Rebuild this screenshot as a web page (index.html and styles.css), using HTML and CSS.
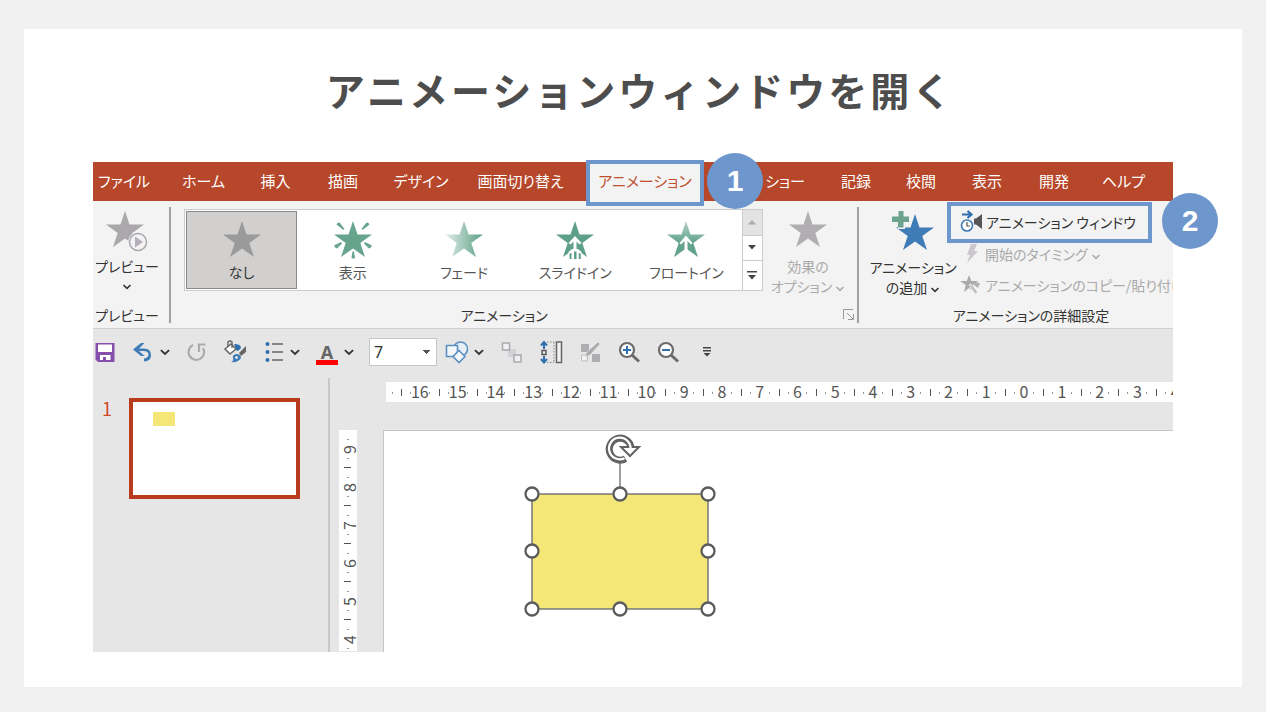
FILE: index.html
```html
<!DOCTYPE html>
<html lang="ja">
<head>
<meta charset="utf-8">
<meta name="viewport" content="width=device-width, initial-scale=1">
<title>アニメーションウィンドウを開く</title>
<link rel="stylesheet" href="styles.css">
</head>
<body>
<svg class="defs" aria-hidden="true">
  <defs>
    <linearGradient id="fade" x1="0" y1="0" x2="1" y2="0"><stop offset="0" stop-color="#e3efea"/><stop offset="1" stop-color="#5a9e85"/></linearGradient>
    <linearGradient id="float" x1="0" y1="0" x2="0" y2="1"><stop offset="0" stop-color="#b5d4c8"/><stop offset=".6" stop-color="#62a38b"/></linearGradient>
    <path id="star" d="M19 0 23.5 13.5H38L26.300 22 31 36 19 27.500 7 36 11.700 22 0 13.500H14.500Z"/>
    <symbol id="chev" viewBox="0 0 10 6"><path d="M1.500 1 5 4.300 8.500 1" fill="none" stroke="currentColor" stroke-width="1.600"/></symbol>
  </defs>
</svg>
<main class="card">
  <h1 class="title">アニメーションウィンドウを開く</h1>
  <section class="app">
    <nav class="tabs">
      <a href="#">ファイル</a>
      <a href="#">ホーム</a>
      <a href="#">挿入</a>
      <a href="#">描画</a>
      <a href="#">デザイン</a>
      <a href="#">画面切り替え</a>
      <a href="#" class="current" aria-current="page">アニメーション<b class="step step-one">1</b></a>
      <a href="#" class="slideshow">スライド ショー</a>
      <a href="#">記録</a>
      <a href="#">校閲</a>
      <a href="#">表示</a>
      <a href="#">開発</a>
      <a href="#">ヘルプ</a>
    </nav>

    <div class="ribbon">
      <section class="group preview">
        <button class="tall">
          <svg width="42" height="42" viewBox="0 0 42 42"><use href="#star" fill="#aaa8aa"/><circle cx="32" cy="31" r="10" fill="#f3f3f3"/><circle cx="32" cy="31" r="8.500" fill="#f3f3f3" stroke="#aaa5ac" stroke-width="1.500"/><path d="M29 25.500 37 31l-8 5.500Z" fill="#b5adb8"/></svg>
          <span>プレビュー</span>
          <svg class="chev" width="10" height="6"><use href="#chev"/></svg>
        </button>
        <h2>プレビュー</h2>
      </section>

      <section class="group animation">
        <div class="group-body">
          <div class="gallery">
            <button class="effect selected"><svg width="38" height="38" viewBox="0 0 38 38"><use href="#star" fill="#9a9a9a"/></svg><span>なし</span></button>
            <button class="effect"><svg width="38" height="38" viewBox="0 0 38 38"><use href="#star" fill="#66a48d"/><g fill="#66a48d"><path d="M2.500 3.500Q3 1.500 5.500 1.500L10.500 8 9.500 9Z"/><path d="M35.500 3.500Q35 1.500 32.500 1.500L27.500 8 28.500 9Z"/><path d="M0 24.500 7 21 8 22.500 3 27.500Q1 27 0 24.500Z"/><path d="M38 24.500 31 21 30 22.500 35 27.500Q37 27 38 24.500Z"/><path d="M18.500 30.500h1.500l1 6.500q-2 1-3.500 0Z"/></g></svg><span>表示</span></button>
            <button class="effect"><svg width="38" height="38" viewBox="0 0 38 38"><use href="#star" fill="url(#fade)"/></svg><span>フェード</span></button>
            <button class="effect"><svg width="38" height="38" viewBox="0 0 38 38"><use href="#star" fill="#5d9f87"/><path d="M12.500 22 19 15l6.500 7-2 1.500-3-3V29H17.500V20.500l-3 3Z" fill="#fff"/><path d="M12.500 31 16 28h6l3.500 3v7h-13Z" fill="#fff"/><path d="M13.500 33l2-1.500V38h-2ZM18 30.500h2.500V38H18ZM22.800 31.500l2 1.500v5h-2Z" fill="#5d9f87"/></svg><span>スライドイン</span></button>
            <button class="effect"><svg width="38" height="38" viewBox="0 0 38 38"><use href="#star" fill="url(#float)"/><path d="M12.500 22 19 14.500l6.500 7.500-1.500 1.500-3.500-3.500V29H17.500V20L14 23.500Z" fill="#fff"/></svg><span>フロートイン</span></button>
            <div class="scroller">
              <button disabled aria-label="上へ"><svg width="8" height="5"><path d="M4 0 8 4.500H0Z" fill="#aaa"/></svg></button>
              <button aria-label="下へ"><svg width="8" height="5"><path d="M0 0H8L4 4.500Z" fill="#444"/></svg></button>
              <button aria-label="その他"><svg width="10" height="9"><path d="M0 0H10V1.500H0ZM1 4H9L5 8.500Z" fill="#444"/></svg></button>
            </div>
          </div>
          <button class="tall muted options">
            <svg width="38" height="38" viewBox="0 0 38 38"><use href="#star" fill="#b0aeb0"/></svg>
            <span>効果の</span>
            <span>オプション <svg width="10" height="6"><use href="#chev"/></svg></span>
          </button>
        </div>
        <footer><h2>アニメーション</h2><button class="launcher" aria-label="詳細"><svg width="12" height="12" viewBox="0 0 12 12" fill="none" stroke="#999"><path d="M.5 10V.5H10M4 4 10.500 10.500M5 10.500h5.500V5"/></svg></button></footer>
      </section>

      <section class="group advanced">
        <div class="group-body">
          <button class="tall add">
            <svg width="42" height="39" viewBox="0 0 42 39"><use href="#star" x="4" y="3" fill="#3f7cb6"/><path d="M6-1h7v6h6v7h-6v6H6v-6H-1V5h7Z" fill="#f3f3f3"/><path d="M6.500 0h5v5.500h5.500v5.500h-5.500v5.500H6V11H0V5.500h6.500Z" fill="#6ba38e"/></svg>
            <span>アニメーション</span>
            <span>の追加 <svg width="10" height="6"><use href="#chev"/></svg></span>
          </button>
          <div class="commands">
            <div class="highlight">
              <button class="command"><svg width="24" height="24" viewBox="0 0 24 24"><path d="M4 4.500H12M9.500 1l4 3.500-4 3.500" fill="none" stroke="#2f6fae" stroke-width="2.200"/><circle cx="9" cy="15.500" r="5.500" fill="#fff" stroke="#3f7cb6" stroke-width="1.600"/><path d="M9 12v4H12" fill="none" stroke="#555" stroke-width="1.200"/><path d="M16 8.500h2l6-4.500v15l-6-4.500h-2Z" fill="#555"/></svg><span>アニメーション ウィンドウ</span></button>
              <b class="step step-two">2</b>
            </div>
            <button class="command muted"><svg width="24" height="20" viewBox="0 0 24 20"><path d="M14 0h6l-3 7h4L10 19l3-8H10Z" fill="#ccc6cf"/></svg><span>開始のタイミング <svg width="10" height="6"><use href="#chev"/></svg></span></button>
            <button class="command muted"><svg width="24" height="22" viewBox="0 0 24 22"><path d="M12 1l2.300 6H21l-5 4 1.500 7L12 14l-5 4 1.700-7L3 7h6.800Z" fill="#aaa"/><path d="M14 10 21 18l-3 2-6-9Z" fill="#bbb" stroke="#f3f3f3"/><path d="M18 8l5 1-2 5-4-3Z" fill="#b6b0b8"/></svg><span>アニメーションのコピー/貼り付け</span></button>
          </div>
        </div>
        <h2>アニメーションの詳細設定</h2>
      </section>
    </div>

    <div class="toolbar">
      <div class="tools">
        <button aria-label="保存"><svg width="24" height="24" viewBox="0 0 24 24"><path d="M2.500 3H21.500V22H5L2.500 19.500Z" fill="#874fac"/><path d="M5 4.500H19V12H5ZM7 15H17.500v5H13V17H10v3H7Z" fill="#fff"/></svg></button>
        <button class="split" aria-label="元に戻す"><svg width="24" height="24" viewBox="0 0 24 24"><path d="M2 9.500 10 3h3.500L8 8.500H13q7 0 7 6.500 0 6-7 6.500v-3q4.500-.5 4.500-4t-5-3.500H8l5.500 5H10Z" fill="#3f7cb6"/></svg><svg class="arrow" width="12" height="7"><use href="#chev"/></svg></button>
        <button aria-label="やり直し"><svg width="24" height="24" viewBox="0 0 24 24" fill="none" stroke="#aaa" stroke-width="2.200"><path d="M8 5A7.800 7.800 0 1 0 18 8M14 12V4.500H20.500"/></svg></button>
        <button aria-label="書式のコピー"><svg width="24" height="24" viewBox="0 0 24 24"><path d="M2 9 8 4l5 5-6 5Z" fill="#fff" stroke="#666" stroke-width="1.500"/><path d="M5 7V2q2-2 4 0v6" fill="none" stroke="#666" stroke-width="1.400"/><path d="M11 4q7 0 7 4l-3 3q-2 0-2-2Z" fill="#2f6fae"/><path d="M23 6V12l-5 4-2-3Z" fill="#666"/><path d="M13 14q5 0 5 4-3 5-10 4 3-1 2-4t3-4Z" fill="#3f7cb6"/><circle cx="13.500" cy="17.500" r="1.300" fill="#fff"/></svg></button>
        <button class="split" aria-label="箇条書き"><svg width="24" height="24" viewBox="0 0 24 24"><g fill="#2f6fae"><circle cx="6.500" cy="4" r="2"/><circle cx="6.500" cy="12" r="2"/><circle cx="6.500" cy="20" r="2"/></g><path d="M11 4H22M11 12H22M11 20H22" stroke="#666" stroke-width="1.500"/></svg><svg class="arrow" width="12" height="7"><use href="#chev"/></svg></button>
        <button class="split" aria-label="フォントの色"><span class="font-color">A</span><svg class="arrow" width="12" height="7"><use href="#chev"/></svg></button>
        <select class="size" aria-label="フォント サイズ"><option>7</option></select>
      </div>
      <div class="tools second">
        <button class="split" aria-label="図形"><svg width="24" height="24" viewBox="0 0 24 24" fill="#f4f7fa" stroke="#5a8fc4" stroke-width="1.600"><circle cx="15.500" cy="9" r="7" fill="#e8eef5"/><path d="M1.500 5.500h11v11h-11Z"/><path d="M14 10.500l6 6-6 6-6-6Z"/></svg><svg class="arrow" width="12" height="7"><use href="#chev"/></svg></button>
        <button aria-label="配置"><svg width="24" height="24" viewBox="0 0 24 24"><path d="M8 9h8v8H8Z" fill="#d5d0d8"/><path d="M2.500 3h7v7h-7ZM14 15h7v7h-7Z" fill="#f1f1f1" stroke="#aca8ae" stroke-width="1.500"/></svg></button>
        <button aria-label="整列"><svg width="24" height="24" viewBox="0 0 24 24" fill="none"><path d="M5 9V3M2 5.500 5 2l3 3.500M5 16v6M2 19l3 3.500L8 19" stroke="#2f6fae" stroke-width="2"/><path d="M3 10.500h4v4H3Z" stroke="#555" stroke-width="1.400"/><path d="M8 2H15M8 22.500H15M15 2V22" stroke="#888" stroke-dasharray="1.500 1.500"/><path d="M17.500 2h5v20.500h-5Z" stroke="#666" stroke-width="1.500" fill="#f1f1f1"/></svg></button>
        <button aria-label="図形の編集"><svg width="24" height="24" viewBox="0 0 24 24"><path d="M3 4h8v8H3ZM14 14h8v8h-8Z" fill="#b0adb2"/><path d="M3.500 15h6v6h-6Z" fill="#f3f0f4" stroke="#bbb"/><path d="M20 2l2 2-10 11-5 2 2-5Z" fill="#aaa" stroke="#e6e6e6" stroke-width=".6"/></svg></button>
        <button aria-label="拡大"><svg width="24" height="24" viewBox="0 0 24 24" fill="none"><circle cx="10" cy="10" r="7" fill="#fff" stroke="#6b6b6b" stroke-width="2.200"/><path d="M15 15l7 6.500" stroke="#6b6b6b" stroke-width="3"/><path d="M10 6v8M6 10h8" stroke="#2f6fae" stroke-width="2"/></svg></button>
        <button aria-label="縮小"><svg width="24" height="24" viewBox="0 0 24 24" fill="none"><circle cx="10" cy="10" r="7" fill="#fff" stroke="#6b6b6b" stroke-width="2.200"/><path d="M15 15l7 6.500" stroke="#6b6b6b" stroke-width="3"/><path d="M6 10h8" stroke="#2f6fae" stroke-width="2"/></svg></button>
        <button aria-label="その他のコマンド"><svg width="24" height="24" viewBox="0 0 24 24"><path d="M8 7h8V8.500H8ZM8 10h8V11.500H8ZM8.500 13h7L12 16.500Z" fill="#444"/></svg></button>
      </div>
    </div>

    <div class="workspace">
      <aside class="slides">
        <span class="number">1</span>
        <button class="thumb" aria-label="スライド 1"><i></i></button>
      </aside>
      <div class="editor">
        <div class="ruler-h"><ol>
          <li>16</li><li>15</li><li>14</li><li>13</li><li>12</li><li>11</li><li>10</li><li>9</li><li>8</li><li>7</li><li>6</li><li>5</li><li>4</li><li>3</li><li>2</li><li>1</li><li>0</li><li>1</li><li>2</li><li>3</li><li>4</li>
        </ol></div>
        <div class="ruler-v"><ol>
          <li><span>9</span></li><li><span>8</span></li><li><span>7</span></li><li><span>6</span></li><li><span>5</span></li><li><span>4</span></li>
        </ol></div>
        <div class="slide">
          <svg class="shape" width="192" height="186" viewBox="0 0 192 186">
            <path d="M96 30V62" stroke="#7f7f7f" stroke-width="1.500"/>
            <rect x="8" y="62" width="176" height="115" fill="#f5e777" stroke="#777" stroke-width="1.500"/>
            <path d="M101.500 26.800A11 11 0 1 1 107 15" fill="none" stroke="#636363" stroke-width="7"/>
            <path d="M97 15H115L106 24Z" fill="#fff" stroke="#636363" stroke-width="2"/>
            <path d="M100.500 26.200A10.800 10.800 0 1 1 106.500 18" fill="none" stroke="#fff" stroke-width="2.200"/>
            <g fill="#fff" stroke="#5c5c5c" stroke-width="2.300"><circle cx="8" cy="62" r="6.500"/><circle cx="96" cy="62" r="6.500"/><circle cx="184" cy="62" r="6.500"/><circle cx="8" cy="119" r="6.500"/><circle cx="184" cy="119" r="6.500"/><circle cx="8" cy="177" r="6.500"/><circle cx="96" cy="177" r="6.500"/><circle cx="184" cy="177" r="6.500"/></g>
          </svg>
        </div>
      </div>
    </div>
  </section>
</main>
</body>
</html>
```

FILE: styles.css
```css
* { box-sizing: border-box; }
body {
  margin: 0;
  padding: 29px 24px 25px;
  background: #f1f1f1;
  color: #333;
  font: 14px/20px "Noto Sans CJK JP", sans-serif;
  font-feature-settings: "palt";
}
button, select { font: inherit; font-feature-settings: inherit; color: inherit; border: 0; background: none; padding: 0; }
h1, h2, ol { margin: 0; padding: 0; }
ol { list-style: none; }
svg { flex: none; }
.defs { position: absolute; width: 0; height: 0; }

.card { padding: 30px 69px 35px; background: #fff; }
.title {
  margin-bottom: 43px;
  padding-left: 14px;
  color: #4d4d4d;
  font-size: 39px;
  font-weight: 700;
  line-height: 60px;
  letter-spacing: 3px;
  text-align: center;
  font-feature-settings: normal;
}

.tabs {
  display: grid;
  grid-template-columns: 62fr 97fr 47fr 88fr 68fr 131fr 118fr 118fr 68fr 62fr 70fr 64fr 75fr 12fr;
  background: #b7472a;
  height: 39px;
  font-size: 15px;
}
.tabs a {
  display: flex;
  align-items: center;
  justify-content: center;
  padding-bottom: 2px;
  color: #fff;
  text-decoration: none;
  white-space: nowrap;
}
.tabs .current {
  position: relative;
  z-index: 1;
  margin: -2px 0 -5px;
  padding-bottom: 4px;
  border: 4px solid #6d97cc;
  background: #f3f3f3;
  color: #c0502f;
}
.tabs .slideshow { justify-content: flex-end; padding-right: 17px; }

.step {
  position: absolute;
  display: grid;
  place-items: center;
  width: 56px;
  height: 56px;
  border-radius: 50%;
  background: #6d97cc;
  color: #fff;
  font: bold 30px/30px "Liberation Sans", sans-serif;
}
.step-one { top: -11px; left: 117px; }
.step-two { top: -13px; right: -70px; }

.ribbon {
  display: grid;
  grid-template-columns: 78px 688fr 314fr;
  padding: 6px 0 5px;
  background: #f3f3f3;
  border-bottom: 1px solid #d0d0d0;
}
.ribbon h2 { font-size: 14px; font-weight: 400; line-height: 16px; text-align: center; }
.group { display: flex; flex-direction: column; justify-content: space-between; min-width: 0; height: 116px; }
.preview, .animation { border-right: 2px solid #a0a0a0; }
.preview { padding-right: 8px; }
.group-body { display: flex; }
.tall { display: flex; flex-direction: column; align-items: center; padding-top: 4px; white-space: nowrap; }
.tall > svg:first-child { margin-bottom: 7px; }
.preview .tall > svg:first-child { margin: 0 0 3px; }
.preview .chev { margin-top: 8px; }
.muted { color: #aaa; }
.gallery {
  display: grid;
  grid-template-columns: repeat(5, 1fr) 20px;
  flex: 1;
  margin: 2px 0 0 13px;
  height: 82px;
  padding-left: 1px;
  border: 1px solid #ccc;
  background: #fff;
}
.effect { display: flex; flex-direction: column; align-items: center; gap: 3px; padding-top: 11px; color: #555; }
.selected { margin: 1px 0; padding-top: 9px; border: 1px solid #8a8a8a; background: #d1d0cf; color: #333; }
.scroller { display: grid; border-left: 1px solid #ccc; }
.scroller button { display: grid; place-items: center; border-bottom: 1px solid #ccc; }
.scroller button:disabled { background: #e3e3e3; }
.scroller button:last-child { border-bottom: 0; }
.options { width: 94px; padding-right: 4px; }
.animation footer { display: grid; grid-template-columns: 1fr 14px; align-items: center; }
.animation footer h2 { padding-right: 6px; }
.launcher { display: flex; }
.add { width: 88px; margin-left: 10px; }
.advanced .group-body { min-width: 0; }
.commands { display: flex; flex-direction: column; flex: 1; min-width: 0; }
.highlight { position: relative; align-self: flex-start; width: 205px; height: 41px; margin: -5px 0 0 -10px; padding: 4px 7px; border: 4px solid #6d97cc; }
.advanced .tall { flex: none; }
.command { display: flex; align-items: center; gap: 4px; white-space: nowrap; }
.commands > .command { height: 22px; overflow: hidden; }
.commands > .command + .command { margin-top: 9px; }
.advanced h2 { padding-left: 30px; }

.toolbar { display: flex; gap: 8px; align-items: center; padding: 9px 0 12px; background: #e6e6e6; }
.tools { display: flex; align-items: center; gap: 14px; }
.second { gap: 15px; }
.tools button { display: flex; align-items: center; gap: 4px; }
.font-color { width: 22px; margin: 4px 1px 0; border-bottom: 5px solid #f00; color: #666; font: bold 18px/16px "Noto Sans", sans-serif; text-align: center; }
.size {
  width: 68px;
  height: 28px;
  padding-left: 4px;
  border: 1px solid #c6c6c6;
  appearance: none;
  background:
    linear-gradient(to bottom left, #555 50%, transparent 0) right 9px center / 4px 4px no-repeat,
    linear-gradient(to bottom right, #555 50%, transparent 0) right 5px center / 4px 4px no-repeat,
    #fff;
  font: 16px/24px "Noto Sans", sans-serif;
}

.workspace { display: flex; background: #e6e6e6; font: 16px/20px "Noto Sans CJK JP", sans-serif; font-feature-settings: normal; color: #555; }
.slides { display: flex; align-items: flex-start; gap: 17px; flex: 0 0 237px; padding: 20px 28px 0 9px; border-right: 2px solid #c8c8c8; }
.number { color: #d24726; font-size: 18px; line-height: 20px; }
.thumb { display: flex; align-items: flex-start; flex: 1; height: 101px; padding: 10px 20px; border: 4px solid #b93b1d; background: #fff; }
.thumb i { width: 22px; height: 14px; background: #f5e777; }
.editor { display: grid; grid-template-columns: 18px 1fr; grid-template-rows: 20px auto; column-gap: 26px; row-gap: 28px; flex: 1; min-width: 0; padding: 4px 0 0 9px; }
.ruler-h { grid-column: 2; margin-left: 3px; padding-left: 15px; overflow-x: clip; background: #fff linear-gradient(#999, #999) 6px 10px / 1px 2px no-repeat; }
.ruler-h ol { display: grid; grid-template-columns: repeat(21, 1fr); margin-right: -21px; height: 20px; line-height: 18px; }
.ruler-h li {
  text-align: center;
  background:
    linear-gradient(#555, #555) left 7px / 1px 7px,
    linear-gradient(#999, #999) 9px 10px / 1px 2px,
    linear-gradient(#999, #999) right 9px top 10px / 1px 2px;
  background-repeat: no-repeat;
}
.ruler-v { height: 221px; overflow-y: clip; background: #fff; }
.ruler-v li {
  display: grid;
  place-items: center;
  height: 38px;
  background:
    linear-gradient(#555, #555) 5px bottom / 7px 1px,
    linear-gradient(#999, #999) 8px 9px / 2px 1px,
    linear-gradient(#999, #999) 8px 28px / 2px 1px;
  background-repeat: no-repeat;
}
.ruler-v span { writing-mode: vertical-rl; transform: rotate(180deg); }
.slide { padding: 1px 140px 34px; border: solid #c6c6c6; border-width: 1px 0 0 1px; background: #fff; }
.shape { display: block; }
```
